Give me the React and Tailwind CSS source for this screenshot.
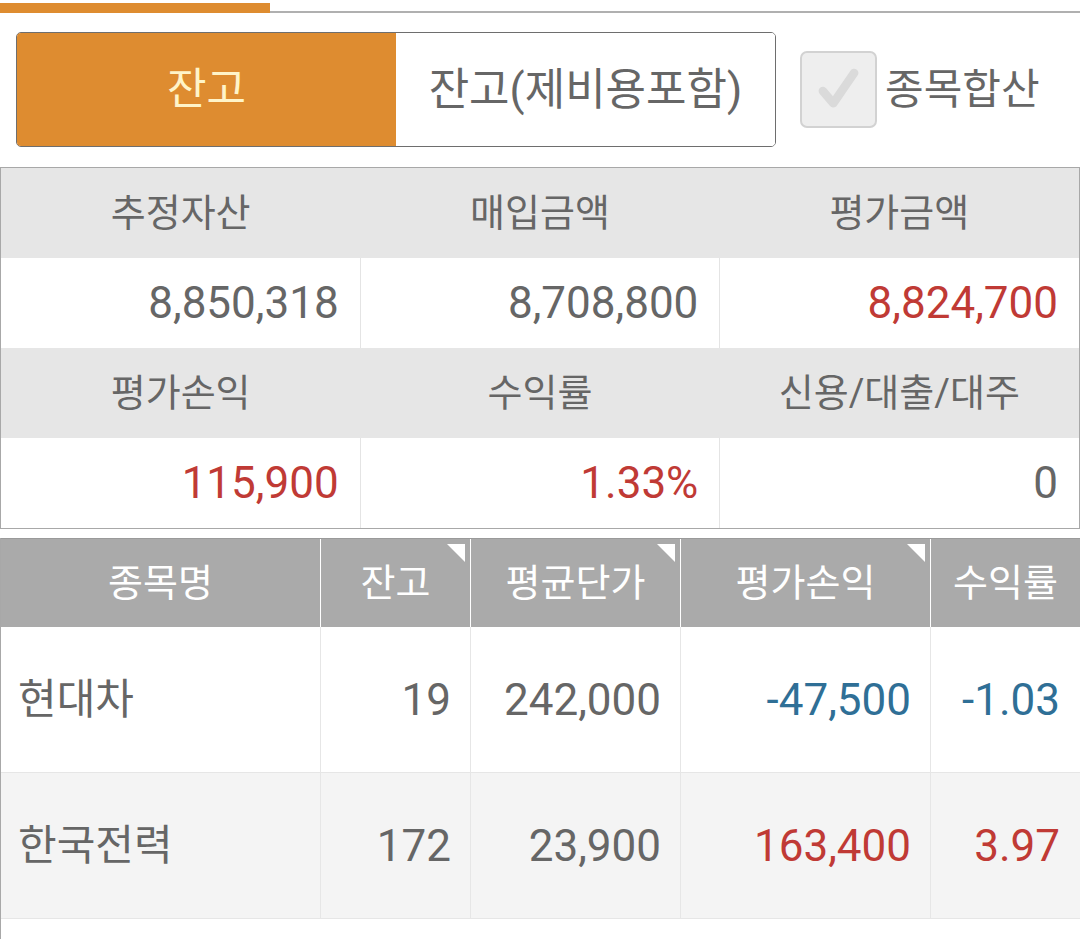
import React from 'react';

const summary = [
    [
        { label: '추정자산', value: '8,850,318' },
        { label: '매입금액', value: '8,708,800' },
        { label: '평가금액', value: '8,824,700', tone: 'red' },
    ],
    [
        { label: '평가손익', value: '115,900', tone: 'red' },
        { label: '수익률', value: '1.33%', tone: 'red' },
        { label: '신용/대출/대주', value: '0' },
    ],
];

const columns = [
    { title: '종목명', width: 'w-[320px]' },
    { title: '잔고', width: 'w-[150px]', sort: true },
    { title: '평균단가', width: 'w-[210px]', sort: true },
    { title: '평가손익', width: 'w-[250px]', sort: true },
    { title: '수익률', width: 'flex-1' },
];

const holdings = [
    { name: '현대차', qty: '19', avg: '242,000', pl: '-47,500', rate: '-1.03', tone: 'blue' },
    { name: '한국전력', qty: '172', avg: '23,900', pl: '163,400', rate: '3.97', tone: 'red' },
];

const toneClass = (tone) => {
    if (tone === 'red') return 'text-[#c03a35]';
    if (tone === 'blue') return 'text-[#2f6f96]';
    return 'text-[#666666]';
};

// little white corner mark on sortable header cells
const Corner = () => (
    <svg className="absolute top-[5px] right-[5px]" width="18" height="18" viewBox="0 0 18 18">
        <polygon points="0,0 18,0 18,18" fill="#ffffff" />
    </svg>
);

export default function App() {
    return (
        <div className="w-[1080px] h-[939px] overflow-hidden bg-white font-[Roboto,'Noto_Sans_CJK_KR',sans-serif] text-[#666666]">
            {/* tab indicator */}
            <div className="flex items-end pt-[3px]">
                <div className="w-[270px] h-[10px] bg-[#de8c30]" />
                <div className="flex-1 h-[2px] bg-[#b0b0b0]" />
            </div>

            {/* segmented toggle + checkbox */}
            <div className="flex items-center px-[16px] mt-[19px]">
                <div className="flex w-[760px] h-[115px] rounded-[5px] border border-[#6e6e6e] overflow-hidden">
                    <div className="flex-1 flex items-center justify-center bg-[#de8c30] text-[#fff4c8] text-[43px]">
                        잔고
                    </div>
                    <div className="flex-1 flex items-center justify-center bg-white text-[#666666] text-[44px]">
                        잔고(제비용포함)
                    </div>
                </div>
                <div className="flex items-center ml-[24px]">
                    <div className="w-[77px] h-[77px] rounded-[7px] border-2 border-[#d2d2d2] bg-[#eeeeee] flex items-center justify-center">
                        <svg width="77" height="77" viewBox="0 0 77 77">
                            <polyline points="22,40 33,53 55,21" fill="none" stroke="#dadada" strokeWidth="9" strokeLinecap="round" strokeLinejoin="round" />
                        </svg>
                    </div>
                    <span className="ml-[8px] text-[42px] text-[#666666]">종목합산</span>
                </div>
            </div>

            {/* summary grid */}
            <div className="mt-[20px] border border-[#a8a8a8]">
                {summary.map((row, ri) => (
                    <div key={ri}>
                        <div className="flex h-[90px] bg-[#e6e6e6]">
                            {row.map((c) => (
                                <div key={c.label} className="flex-1 flex items-center justify-center text-[38px] text-[#666666]">
                                    {c.label}
                                </div>
                            ))}
                        </div>
                        <div className="flex h-[90px] bg-white">
                            {row.map((c, ci) => (
                                <div
                                    key={c.label}
                                    className={`flex-1 flex items-center justify-end pr-[21px] text-[44px] ${toneClass(c.tone)} ${ci < 2 ? 'border-r border-[#e4e4e4]' : ''}`}
                                >
                                    {c.value}
                                </div>
                            ))}
                        </div>
                    </div>
                ))}
            </div>

            {/* holdings table */}
            <div className="mt-[9px] border-l border-[#a8a8a8] h-[500px]">
                <div className="flex h-[89px] bg-[#aaaaaa] border-t border-[#9a9a9a]">
                    {columns.map((col, i) => (
                        <div
                            key={col.title}
                            className={`relative ${col.width} flex items-center justify-center text-[38px] text-white ${i < columns.length - 1 ? 'border-r border-white' : ''}`}
                        >
                            {col.title}
                            {col.sort && <Corner />}
                        </div>
                    ))}
                </div>
                {holdings.map((h, ri) => (
                    <div key={h.name} className={`flex h-[146px] border-b border-[#e6e6e6] ${ri % 2 ? 'bg-[#f4f4f4]' : 'bg-white'}`}>
                        <div className="w-[320px] flex items-center pl-[17px] text-[42px] text-[#666666] border-r border-[#e6e6e6]">
                            {h.name}
                        </div>
                        <div className="w-[150px] flex items-center justify-end pr-[19px] text-[44px] text-[#666666] border-r border-[#e6e6e6]">
                            {h.qty}
                        </div>
                        <div className="w-[210px] flex items-center justify-end pr-[19px] text-[44px] text-[#666666] border-r border-[#e6e6e6]">
                            {h.avg}
                        </div>
                        <div className={`w-[250px] flex items-center justify-end pr-[19px] text-[44px] border-r border-[#e6e6e6] ${toneClass(h.tone)}`}>
                            {h.pl}
                        </div>
                        <div className={`flex-1 flex items-center justify-end pr-[20px] text-[44px] ${toneClass(h.tone)}`}>
                            {h.rate}
                        </div>
                    </div>
                ))}
            </div>
        </div>
    );
}
